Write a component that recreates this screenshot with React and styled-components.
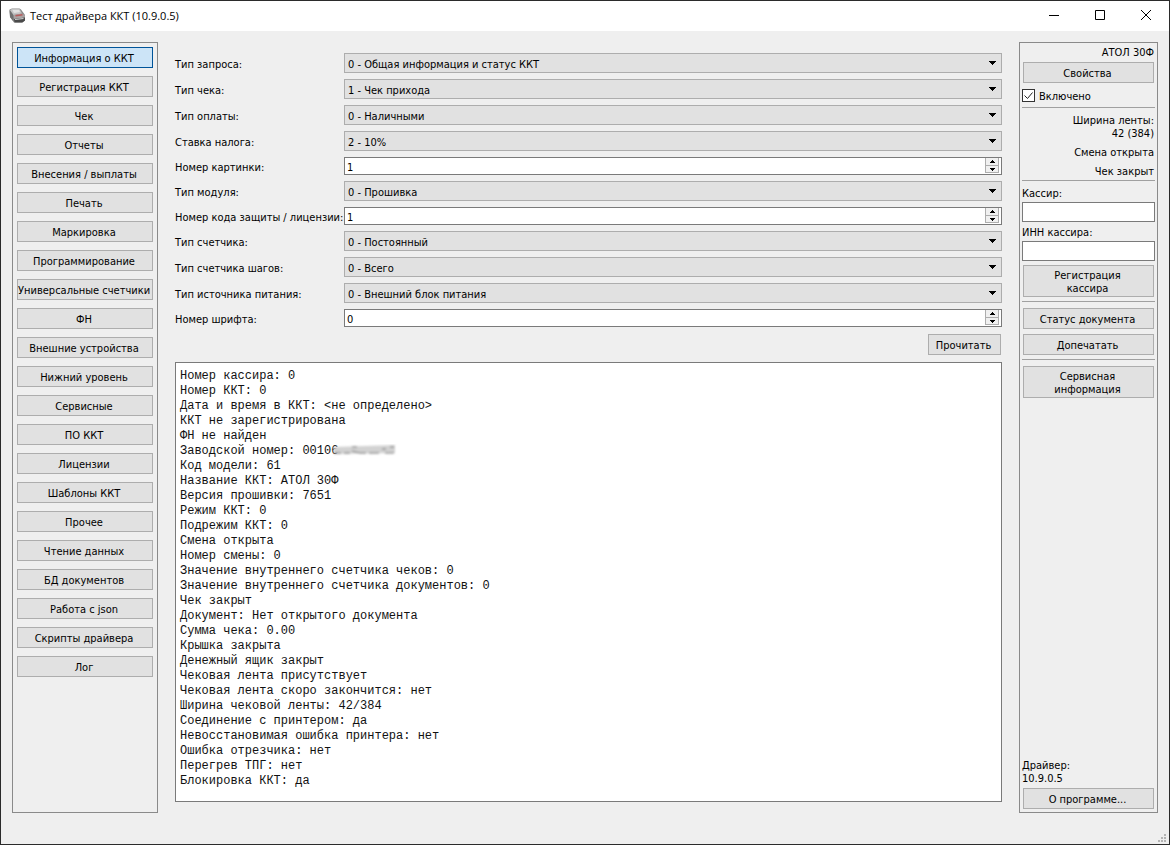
import { useState } from 'react';
import styled, { createGlobalStyle, css } from 'styled-components';

const GlobalStyle = createGlobalStyle`
  * {
    box-sizing: border-box;
  }

  body {
    margin: 0;
    background-color: #efefef;
  }

  body, button, input, select {
    font-family: 'DejaVu Sans Condensed', 'Noto Sans', sans-serif;
    font-size: 11px;
    line-height: 13px;
    color: #000;
  }
`;

const Janela = styled.div`
  display: flex;
  flex-direction: column;
  min-height: 100vh;
  border: 1px solid #2b2b2b;
  background-color: #efefef;
`;

const TitleBar = styled.header`
  display: flex;
  align-items: center;
  height: 30px;
  padding-left: 8px;
  background-color: #fff;
`;

const Title = styled.h1`
  flex: 1;
  margin: 0 0 0 4px;
  font-family: 'Open Sans', sans-serif;
  font-size: 11px;
  font-weight: 400;
  line-height: 16px;
`;

const WindowButton = styled.button`
  display: flex;
  align-items: center;
  justify-content: center;
  width: 46px;
  height: 30px;
  padding: 0;
  border: none;
  background: none;

  &:hover {
    background-color: #e5e5e5;
  }
`;

const Content = styled.div`
  display: flex;
  flex: 1;
  gap: 17px;
  padding: 11px 11px 0;
`;

const frame = css`
  border: 1px solid #8a8a8a;
`;

const Sidebar = styled.nav`
  ${frame}
  display: flex;
  flex-direction: column;
  flex: none;
  gap: 8px;
  width: 146px;
  padding: 4px;
`;

const Button = styled.button`
  flex: none;
  min-height: 21px;
  padding: 2px 2px 0 0;
  border: 1px solid ${({ $active }) => ($active ? '#005499' : '#adadad')};
  background-color: ${({ $active }) => ($active ? '#cce4f7' : '#e1e1e1')};
  white-space: nowrap;

  &:hover {
    border-color: #0078d7;
  }
`;

const Main = styled.main`
  display: flex;
  flex-direction: column;
  flex: 1;
  min-width: 0;
  padding: 11px 0;
`;

const Form = styled.form`
  display: flex;
  flex-direction: column;
  gap: 6px;
`;

const Row = styled.div`
  display: grid;
  grid-template-columns: 163px 1fr;
  column-gap: 6px;
  align-items: center;
`;

const RowLabel = styled.label`
  padding-top: 2px;
  white-space: nowrap;
`;

const SelectBox = styled.div`
  display: grid;
  align-items: center;

  > * {
    grid-area: 1 / 1;
  }

  svg {
    justify-self: end;
    margin-right: 6px;
    pointer-events: none;
  }
`;

const Select = styled.select`
  appearance: none;
  width: 100%;
  height: 20px;
  padding: 3px 20px 0 3px;
  border: 1px solid #adadad;
  border-radius: 0;
  background-color: #e1e1e1;
`;

const SpinBox = styled.div`
  display: flex;
  height: 18px;
  padding: 0 2px;
  border: 1px solid #7a7a7a;
  background-color: #fff;
`;

const SpinInput = styled.input`
  appearance: textfield;
  flex: 1;
  min-width: 0;
  padding: 3px 0 0;
  border: none;
  background: none;
  outline: none;

  &::-webkit-inner-spin-button {
    display: none;
  }
`;

const SpinButtons = styled.div`
  display: grid;
  grid-template-rows: 8px 7px;
  width: 14px;
`;

const SpinButton = styled.button`
  display: flex;
  align-items: center;
  justify-content: center;
  padding: 0;
  border: 1px solid #adadad;
  border-top-width: 0;
  background-color: #f0f0f0;
`;

const Actions = styled.div`
  display: flex;
  justify-content: flex-end;
  padding: 1px 1px 7px 0;

  button {
    width: 73px;
  }
`;

const LogBox = styled.div`
  position: relative;
  display: flex;
  flex: 1;
`;

const Log = styled.textarea`
  flex: 1;
  padding: 6px 4px;
  border: 1px solid #7a7a7a;
  border-radius: 0;
  outline: none;
  resize: none;
  background-color: #fff;
  color: #111;
  font-family: 'Liberation Mono', monospace;
  font-size: 12px;
  line-height: 15px;
`;

/* hides the tail of the serial number */
const Smudge = styled.svg`
  position: absolute;
  left: 157px;
  top: 82px;
`;

const Panel = styled.aside`
  ${frame}
  display: flex;
  flex-direction: column;
  flex: none;
  width: 139px;
  padding: 0 2px 3px;

  ${Button} {
    margin: 0 1px;
  }
`;

const Section = styled.section`
  display: flex;
  flex-direction: column;
  gap: ${({ $gap }) => $gap}px;
  padding: ${({ $top = 6 }) => $top}px 0 ${({ $bottom = 4 }) => $bottom}px;
  border-bottom: 1px solid #a0a0a0;

  &:last-of-type {
    border-bottom: none;
  }
`;

const Info = styled.div`
  padding-right: 1px;
  text-align: right;
`;

const CheckLabel = styled.label`
  display: flex;
  align-items: center;
  gap: 4px;
  padding: 3px 0;
`;

const CheckText = styled.span`
  margin-bottom: -2px;
`;

const CheckMark = styled.span`
  display: grid;
  width: 13px;
  height: 13px;

  > * {
    grid-area: 1 / 1;
    margin: 0;
  }

  input {
    appearance: none;
    border: 1px solid #333;
    background-color: #fff;
  }

  svg {
    pointer-events: none;
  }

  input:not(:checked) + svg {
    display: none;
  }
`;

const Field = styled.div`
  display: flex;
  flex-direction: column;
  gap: 2px;
`;

const TextInput = styled.input`
  width: 100%;
  height: 20px;
  padding: 1px 3px;
  border: 1px solid #7a7a7a;
  background-color: #fff;
`;

const TallButton = styled(Button)`
  height: 32px;
  padding: 2px 22px 0 20px;
  white-space: normal;
`;

const Version = styled.div`
  margin-top: auto;
  margin-bottom: 3px;
`;

const Footer = styled.footer`
  display: flex;
  align-items: flex-end;
  justify-content: flex-end;
  height: 31px;
  padding: 0 2px 1px 0;
`;

const PrinterIcon = () => (
  <svg width="17" height="16" viewBox="0 0 17 16" aria-hidden="true">
    <path d="M0.5 1.5 L3 0.5 H10.5 L12 1.5 L16 7 V12.5 L13 14.5 L5 14.5 L1 9 Z" fill="#8a8a8a" />
    <path d="M1 2 L3 1 H10.5 L13 5.5 L4.5 7 Z" fill="#c4c4c4" />
    <path d="M3.5 2 H10 L11 4 L5 5 Z" fill="#e2e2e2" />
    <path d="M0.5 2 L4.5 7.5 V13.5 L1 9 Z" fill="#707070" />
    <path d="M4.5 7 L13 5.5 L16 7.5 V9.5 L5 11 Z" fill="#a9a3a3" />
    <path d="M6.5 7.8 L13.5 6.8" stroke="#b85a5a" strokeWidth="1.5" />
    <path d="M5 11 L16 9.5 V12.5 L13.5 14.5 H5.5 Z" fill="#4a4a4a" />
    <path d="M6 11.5 L14.5 10.5" stroke="#d5d5d5" />
  </svg>
);

const ArrowDown = () => (
  <svg width="7" height="4" viewBox="0 0 7 4" shapeRendering="crispEdges" aria-hidden="true">
    <path d="M0 0h7v1h-1v1h-1v1h-1v1h-1v-1h-1v-1h-1v-1h-1z" />
  </svg>
);

const SpinArrow = ({ down }) => (
  <svg width="5" height="3" viewBox="0 0 5 3" shapeRendering="crispEdges" aria-hidden="true">
    <path d={down ? 'M0 0h5v1h-1v1h-1v1h-1v-1h-1v-1h-1z' : 'M0 3h5v-1h-1v-1h-1v-1h-1v1h-1v1h-1z'} />
  </svg>
);

const menu = [
  'Информация о ККТ',
  'Регистрация ККТ',
  'Чек',
  'Отчеты',
  'Внесения / выплаты',
  'Печать',
  'Маркировка',
  'Программирование',
  'Универсальные счетчики',
  'ФН',
  'Внешние устройства',
  'Нижний уровень',
  'Сервисные',
  'ПО ККТ',
  'Лицензии',
  'Шаблоны ККТ',
  'Прочее',
  'Чтение данных',
  'БД документов',
  'Работа с json',
  'Скрипты драйвера',
  'Лог',
];

const fields = [
  { id: 'request', label: 'Тип запроса:', option: '0 - Общая информация и статус ККТ' },
  { id: 'receipt', label: 'Тип чека:', option: '1 - Чек прихода' },
  { id: 'payment', label: 'Тип оплаты:', option: '0 - Наличными' },
  { id: 'tax', label: 'Ставка налога:', option: '2 - 10%' },
  { id: 'picture', label: 'Номер картинки:', number: 1 },
  { id: 'module', label: 'Тип модуля:', option: '0 - Прошивка' },
  { id: 'license', label: 'Номер кода защиты / лицензии:', number: 1 },
  { id: 'counter', label: 'Тип счетчика:', option: '0 - Постоянный' },
  { id: 'steps', label: 'Тип счетчика шагов:', option: '0 - Всего' },
  { id: 'power', label: 'Тип источника питания:', option: '0 - Внешний блок питания' },
  { id: 'font', label: 'Номер шрифта:', number: 0 },
];

const log = `Номер кассира: 0
Номер ККТ: 0
Дата и время в ККТ: <не определено>
ККТ не зарегистрирована
ФН не найден
Заводской номер: 00106
Код модели: 61
Название ККТ: АТОЛ 30Ф
Версия прошивки: 7651
Режим ККТ: 0
Подрежим ККТ: 0
Смена открыта
Номер смены: 0
Значение внутреннего счетчика чеков: 0
Значение внутреннего счетчика документов: 0
Чек закрыт
Документ: Нет открытого документа
Сумма чека: 0.00
Крышка закрыта
Денежный ящик закрыт
Чековая лента присутствует
Чековая лента скоро закончится: нет
Ширина чековой ленты: 42/384
Соединение с принтером: да
Невосстановимая ошибка принтера: нет
Ошибка отрезчика: нет
Перегрев ТПГ: нет
Блокировка ККТ: да`;

const NumberField = ({ id, initial }) => {
  const [value, setValue] = useState(initial);

  return (
    <SpinBox>
      <SpinInput id={id} type="number" value={value} onChange={(e) => setValue(e.target.value)} />
      <SpinButtons>
        <SpinButton type="button" aria-label="Больше" onClick={() => setValue(Number(value) + 1)}>
          <SpinArrow />
        </SpinButton>
        <SpinButton type="button" aria-label="Меньше" onClick={() => setValue(Number(value) - 1)}>
          <SpinArrow down />
        </SpinButton>
      </SpinButtons>
    </SpinBox>
  );
};

const App = () => {
  const [active, setActive] = useState(menu[0]);
  const [enabled, setEnabled] = useState(true);

  return (
    <>
      <GlobalStyle />
      <Janela>
        <TitleBar>
          <PrinterIcon />
          <Title>Тест драйвера ККТ (10.9.0.5)</Title>
          <WindowButton aria-label="Свернуть">
            <svg width="10" height="12" shapeRendering="crispEdges"><path d="M0 5h10v1H0z" /></svg>
          </WindowButton>
          <WindowButton aria-label="Развернуть">
            <svg width="10" height="12" fill="none" stroke="#000"><path d="M0.5 0.5h9v9h-9z" /></svg>
          </WindowButton>
          <WindowButton aria-label="Закрыть">
            <svg width="10" height="12" fill="none" stroke="#000"><path d="M0 0l10 10M10 0l-10 10" /></svg>
          </WindowButton>
        </TitleBar>

        <Content>
          <Sidebar>
            {menu.map((item) => (
              <Button key={item} $active={item === active} onClick={() => setActive(item)}>{item}</Button>
            ))}
          </Sidebar>

          <Main>
            <Form onSubmit={(e) => e.preventDefault()}>
              {fields.map(({ id, label, option, number }) => (
                <Row key={id}>
                  <RowLabel htmlFor={id}>{label}</RowLabel>
                  {option ? (
                    <SelectBox>
                      <Select id={id}><option>{option}</option></Select>
                      <ArrowDown />
                    </SelectBox>
                  ) : (
                    <NumberField id={id} initial={number} />
                  )}
                </Row>
              ))}
              <Actions>
                <Button>Прочитать</Button>
              </Actions>
            </Form>
            <LogBox>
              <Log readOnly aria-label="Результат" value={log} />
              <Smudge width="66" height="12" aria-hidden="true">
                <defs>
                  <filter id="soft" x="-10%" y="-30%" width="120%" height="160%">
                    <feGaussianBlur stdDeviation="0.8" />
                  </filter>
                </defs>
                <g filter="url(#soft)">
                  <path d="M2 3 L63 1 V9 L2 10 Z" fill="#d2d2d2" />
                  <path d="M2 9h7M12 9h6M20 7l8 2h6M37 9h10M50 5h4M53 9h9M20 3h5M58 3h4" stroke="#777" fill="none" />
                </g>
              </Smudge>
            </LogBox>
          </Main>

          <Panel>
            <Section $gap={3} $top={3} $bottom={2}>
              <Info>АТОЛ 30Ф</Info>
              <Button>Свойства</Button>
              <CheckLabel>
                <CheckMark>
                  <input type="checkbox" checked={enabled} onChange={() => setEnabled(!enabled)} />
                  <svg width="13" height="13" fill="none" stroke="#222"><path d="M2.5 6.5l3 3 5-6" /></svg>
                </CheckMark>
                <CheckText>Включено</CheckText>
              </CheckLabel>
            </Section>
            <Section $gap={6} $bottom={2}>
              <Info>Ширина ленты:<br />42 (384)</Info>
              <Info>Смена открыта</Info>
              <Info>Чек закрыт</Info>
            </Section>
            <Section $gap={4}>
              <Field>
                <label htmlFor="cashier">Кассир:</label>
                <TextInput id="cashier" />
              </Field>
              <Field>
                <label htmlFor="inn">ИНН кассира:</label>
                <TextInput id="inn" />
              </Field>
              <TallButton>Регистрация кассира</TallButton>
            </Section>
            <Section $gap={5}>
              <Button>Статус документа</Button>
              <Button>Допечатать</Button>
            </Section>
            <Section $gap={5}>
              <TallButton>Сервисная информация</TallButton>
            </Section>
            <Version>Драйвер:<br />10.9.0.5</Version>
            <Button>О программе...</Button>
          </Panel>
        </Content>

        <Footer>
          <svg width="9" height="9" fill="#b4b4b4" shapeRendering="crispEdges" aria-hidden="true">
            <path d="M6 0h2v2h-2zM3 3h2v2h-2zM6 3h2v2h-2zM0 6h2v2h-2zM3 6h2v2h-2zM6 6h2v2h-2z" />
          </svg>
        </Footer>
      </Janela>
    </>
  );
};

export default App;
